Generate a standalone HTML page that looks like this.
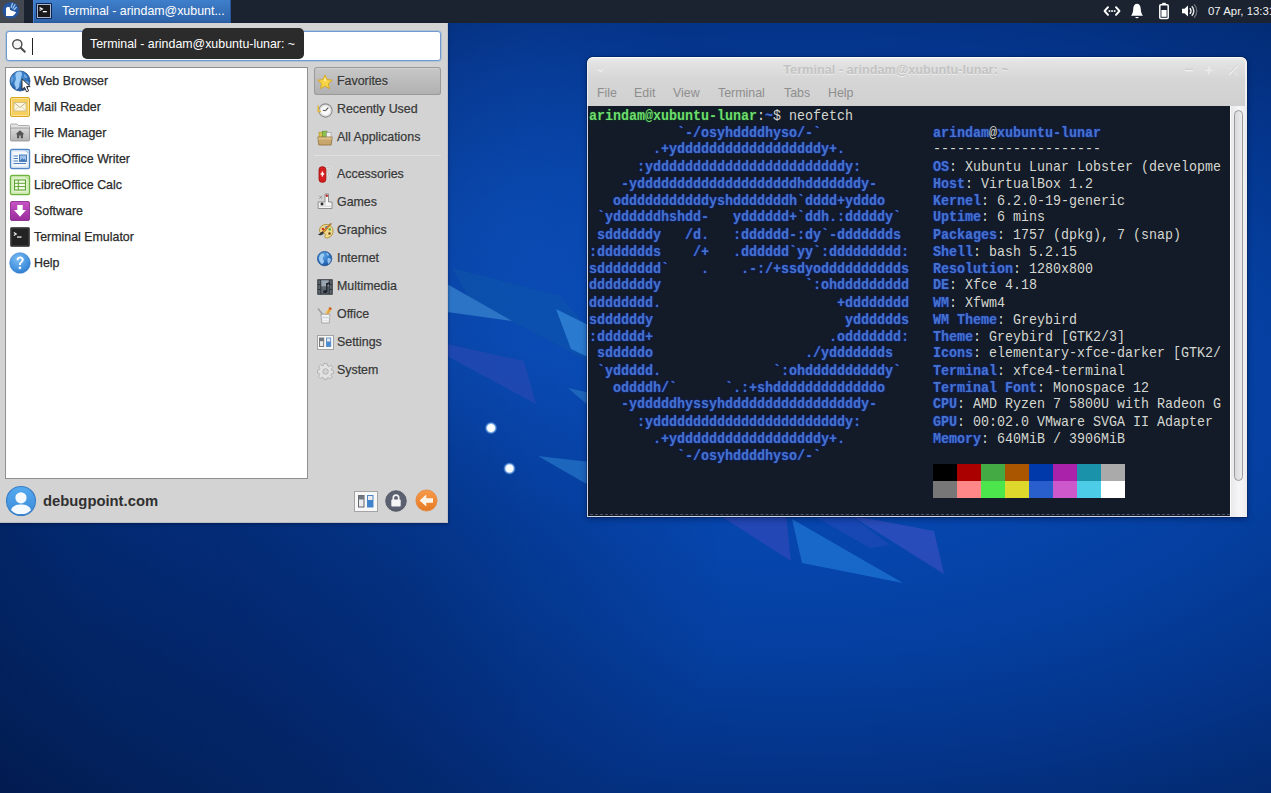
<!DOCTYPE html>
<html>
<head>
<meta charset="utf-8">
<title>Xubuntu Desktop</title>
<style>
*{box-sizing:border-box;margin:0;padding:0}
html,body{width:1271px;height:793px;overflow:hidden}
body{position:relative;font-family:"Liberation Sans",sans-serif;background:#053a96;color:#3c3c3c}
#wall{position:absolute;left:0;top:0;width:1271px;height:793px;
background:
radial-gradient(ellipse 330px 260px at 400px 590px,rgba(0,8,44,.2) 0,rgba(0,8,44,.13) 50%,rgba(0,8,44,0) 100%),
radial-gradient(ellipse 230px 300px at 500px 230px,rgba(22,92,206,.3) 0,rgba(22,92,206,.18) 50%,rgba(22,92,206,0) 100%),
linear-gradient(90deg,rgba(0,8,40,.22) 0,rgba(0,8,40,.16) 18%,rgba(0,8,40,0) 42%),
radial-gradient(ellipse 1100px 570px at 800px 395px,#0749b2 0%,#0645ac 28%,#0540a1 44%,#043a95 54%,#04348a 64%,#032d78 76%,#032768 90%,#02215c 100%);
}
#wallsvg{position:absolute;left:0;top:0}
/* panel */
#panel{position:absolute;left:0;top:0;width:1271px;height:23px;background:#1b2230;color:#fff;font-size:12px}
#mbtn{position:absolute;left:0;top:0;width:24px;height:23px;background:#444851}
#task{position:absolute;left:33px;top:0;width:198px;height:23px;background:linear-gradient(#3f7fcb,#2d62a8);border-left:1px solid #4a86cf;border-right:1px solid #28579a}
#task .tx{position:absolute;left:28px;top:3.600px;font-size:12.4px;color:#fff;white-space:nowrap}
#clock{position:absolute;left:1208px;top:5px;font-size:11.4px;color:#f2f2f2;white-space:nowrap}
/* whisker menu */
#menu{position:absolute;left:0;top:23px;width:448px;height:500px;background:#d3d3d3;border-right:1px solid #bfc3c8;border-bottom:1px solid #b9bdc3;box-shadow:0 1px 3px rgba(0,10,40,.45)}
#search{position:absolute;left:6px;top:8px;width:435px;height:30px;background:#fff;border:1px solid #6f9bd0;border-radius:3px;box-shadow:0 0 0 1px rgba(120,165,220,.35)}
#caret{position:absolute;left:25px;top:6px;width:1px;height:17px;background:#222}
#tip{position:absolute;left:82px;top:28px;width:222px;height:31px;background:#2b2b2b;border-radius:5px;color:#fff;font-size:12.4px;line-height:31px;white-space:nowrap;z-index:30}
#tip span{position:absolute;left:8px;top:.5px}
#list{position:absolute;left:5px;top:44px;width:303px;height:412px;background:#fff;border:1px solid #8f8f8f}
.it{position:absolute;left:0;height:26px;width:300px}
.it svg{position:absolute;left:2px;top:2px}
.it span{position:absolute;left:28px;top:5.700px;-webkit-text-stroke:.25px #2a2a2a;font-size:12.4px;color:#2a2a2a;white-space:nowrap}
.cat{position:absolute;left:314px;width:127px;height:28px}
.cat svg{position:absolute;left:3px;top:6.500px}
.cat span{position:absolute;left:23px;top:7px;-webkit-text-stroke:.25px #383838;font-size:12.4px;color:#383838;white-space:nowrap;text-shadow:0 1px 0 rgba(255,255,255,.35)}
#fav{background:linear-gradient(#c8c8c8,#b0b0b0);box-shadow:inset 0 0 0 1px #9a9a9a,inset 0 2px 0 rgba(255,255,255,.18);border-radius:3px}
#sep{position:absolute;left:314px;top:132px;width:127px;height:1px;background:#c2c2c2;border-bottom:1px solid #e0e0e0}
#user{position:absolute;left:43px;top:470px;font-size:14.8px;font-weight:bold;color:#303030;white-space:nowrap}
/* terminal */
#win{position:absolute;left:587px;top:57px;width:660px;height:460px;background:#d6d6d6;border-radius:6px 6px 0 0;box-shadow:0 0 0 1px rgba(2,20,60,.35),0 2px 6px rgba(0,10,40,.4);overflow:hidden}
#tbar{position:absolute;left:0;top:0;width:660px;height:49px;background:linear-gradient(#ececec 0,#e3e3e3 8%,#d6d6d6 45%,#d0d0d0 100%);border-top:1px solid #fafafa;border-left:1px solid #f2f2f2;border-right:2px solid #f1f1f1;border-radius:6px 6px 0 0}
#ttl{position:absolute;left:0;top:5px;width:616px;text-align:center;font-size:12.7px;font-weight:bold;color:#c3c3c3;text-shadow:0 1px 0 #ededed;white-space:nowrap}
#mbar{position:absolute;left:0;top:28px;height:18px;font-size:12.4px;color:#8e8e8e;white-space:nowrap}
#mbar span{position:absolute;top:0}
#term{position:absolute;left:0;top:49px;width:643px;height:411px;background:#131a28;border-left:1px solid #d3d8e6;border-bottom:1px solid #d3d8e6}
#term:after{content:"";position:absolute;left:2px;right:0;bottom:1px;height:0;border-top:1px dashed rgba(150,160,180,.45)}
#sb{position:absolute;left:643px;top:49px;width:17px;height:411px;background:linear-gradient(90deg,#e9e9ec,#f6f6f8 50%,#ececee);border-left:1px solid #fdfdfd}
#thumb{position:absolute;left:3px;top:4px;width:9px;height:371px;border:1px solid #9a9a9a;border-radius:5px;background:linear-gradient(90deg,#d9d9dc,#ececee)}
pre{position:absolute;left:1px;top:2px;font-family:"Liberation Mono",monospace;font-size:13.333px;line-height:15.741px;color:#d3d7cf;white-space:pre;transform:scaleY(1.08);transform-origin:0 0}
.b{color:#4672cc;font-weight:bold;text-shadow:0 0 2px #14309c,0 0 1px #14309c}
.g{color:#6fdc6f;font-weight:bold;text-shadow:0 0 2px #0f5a1c}
.w{color:#d3d7cf}
#cols{position:absolute;left:345px;top:358px;width:192px;height:34px}
#cols i{position:absolute;width:24px;height:17px}
</style>
</head>
<body>
<div id="wall"></div>
<svg id="wallsvg" width="1271" height="793" viewBox="0 0 1271 793">
<defs>
<radialGradient id="dot"><stop offset="0" stop-color="#ffffff"/><stop offset=".55" stop-color="#f4faff"/><stop offset=".7" stop-color="#9cc9f5" stop-opacity=".8"/><stop offset="1" stop-color="#3b86dd" stop-opacity="0"/></radialGradient>
</defs>
<polygon points="452,268 560,296 590,330 590,362 548,340 470,300" fill="#0d55aa" opacity=".55"/>
<polygon points="447,284 447,312 512,321" fill="#2c74c6"/>
<polygon points="556,309 590,326 590,358 571,349" fill="#2a7bd0"/>
<polygon points="447,344 524,361 536,404 447,356" fill="#2848b2" opacity=".7"/>
<polygon points="568,388 590,393 590,407" fill="#1e66bc"/>
<polygon points="538,456 590,462 590,486" fill="#1c66bd"/>
<polygon points="719,515 786,515 791,561" fill="#2a47b6" opacity=".8"/>
<polygon points="812,515 850,515 890,545 870,548" fill="#1f49b6" opacity=".7"/>
<polygon points="792,519 903,583 802,563" fill="#1a6ccc" opacity=".9"/>
<polygon points="850,515 934,531 944,574" fill="#3a50c0" opacity=".65"/>
<circle cx="491" cy="428" r="6.500" fill="url(#dot)"/>
<circle cx="509.500" cy="468.500" r="6.500" fill="url(#dot)"/>
</svg>

<div id="panel">
 <div id="mbtn"><svg width="24" height="23" viewBox="0 0 24 23" style="position:absolute;left:0;top:0">
<circle cx="10.800" cy="10.400" r="8.200" fill="#24569f"/>
<path d="M11 7.800 L12.600 3 M12.600 8.800 L15.200 4.200 M13.800 10 L16.600 7" stroke="#9cc4f0" stroke-width="1.300" fill="none"/>
<path d="M6 15.900 L6 8 L7.800 6.700 L9.700 7.300 L10.100 10.100 L16.200 12.300 L14.800 14.300 L12.800 15.900 Z" fill="#ffffff"/>
</svg></div>
 <div id="task"><svg width="16" height="16" viewBox="0 0 16 16" style="position:absolute;left:2px;top:3px">
<rect x="0" y="0" width="16" height="16" rx="1" fill="#0d2352"/>
<rect x="1.500" y="1.500" width="13" height="13" fill="#19191b" stroke="#aab6cc" stroke-width="1"/>
<path d="M3.600 4.600 L6.200 6 L3.600 7.400" fill="none" stroke="#fff" stroke-width="1.300"/>
<rect x="6.800" y="8" width="4" height="1.300" fill="#fff"/>
</svg><div class="tx">Terminal - arindam@xubunt...</div></div>
 <svg width="100" height="23" viewBox="0 0 100 23" style="position:absolute;left:1100px;top:0">
<!-- network -->
<g fill="none" stroke="#fff" stroke-width="2" stroke-linecap="round" stroke-linejoin="round">
<path d="M8 7.200 L4.600 11 L8 14.800"/><path d="M16 7.200 L19.400 11 L16 14.800"/>
</g>
<g fill="#fff"><rect x="8.600" y="10.200" width="1.700" height="1.700"/><rect x="11.200" y="10.200" width="1.700" height="1.700"/><rect x="13.800" y="10.200" width="1.700" height="1.700"/></g>
<!-- bell -->
<path d="M37 3.800 C34 3.800 33.300 7 33.200 9.500 C33.100 12.500 32 14.400 31 15.800 L43 15.800 C42 14.400 40.900 12.500 40.800 9.500 C40.700 7 40 3.800 37 3.800 Z" fill="#fff"/>
<path d="M35.200 16.900 A1.900 1.900 0 0 0 38.800 16.900 Z" fill="#fff"/>
<!-- battery -->
<rect x="62.200" y="2.800" width="3.600" height="1.800" fill="#fff"/>
<rect x="59.800" y="4.800" width="8.400" height="13.600" rx="1" fill="none" stroke="#fff" stroke-width="1.500"/>
<rect x="61.400" y="10" width="5.200" height="6.800" fill="#fff"/>
<!-- volume -->
<path d="M82 8.800 L84.500 8.800 L88 5.400 L88 16.600 L84.500 13.200 L82 13.200 Z" fill="#fff"/>
<path d="M89.800 8.200 A4 4 0 0 1 89.800 13.800" fill="none" stroke="#fff" stroke-width="1.500"/>
<path d="M91.800 6.200 A6.800 6.800 0 0 1 91.800 15.800" fill="none" stroke="#fff" stroke-width="1.500" opacity=".85"/>
<path d="M94 4.200 A9.600 9.600 0 0 1 94 17.800" fill="none" stroke="#fff" stroke-width="1.300" opacity=".35"/>
</svg>
 <div id="clock">07 Apr, 13:31</div>
</div>

<div id="menu">
 <div id="search"><svg width="16" height="16" viewBox="0 0 16 16" style="position:absolute;left:4px;top:6px"><circle cx="6.300" cy="6.300" r="4.600" fill="#f4f4f4" stroke="#4a4a4a" stroke-width="1.400"/><path d="M9.700 9.700 L13.800 13.800" stroke="#4a4a4a" stroke-width="2" stroke-linecap="round"/></svg><div id="caret"></div></div>
 <div id="list">
 <div class="it" style="top:0px"><svg style="left:3px;top:2px" width="22" height="22" viewBox="0 0 22 22"><defs><radialGradient id="gl" cx=".42" cy=".35" r=".75"><stop offset="0" stop-color="#5a9fe0"/><stop offset=".6" stop-color="#2d6fba"/><stop offset="1" stop-color="#1c4a8a"/></radialGradient></defs>
<circle cx="11" cy="11" r="10" fill="url(#gl)" stroke="#24528f" stroke-width=".8"/>
<path d="M8.500 1.800 C10.500 1.200 12.800 1.800 13 3.500 C13.200 5.500 11.500 6.500 11.800 8.500 C12 10 11 11 10.500 12.500 C10 14.500 11 16 9.500 18 C8.500 19.300 7 19.800 6.500 19.500 C7.500 17.500 6 16.500 5.500 14.500 C5 12.500 6.500 11.500 7 9.500 C7.500 7.500 6 6.500 6.500 4.500 C6.800 3.200 7.500 2.200 8.500 1.800 Z" fill="#a6d3fa" opacity=".9"/>
<path d="M15 4 C16.500 4.500 18 6 18.500 7.500 C17.500 8.500 15.500 8 15 6.500 Z M16 11.500 C17.500 11 19.500 11.500 20 12.500 C19.500 15 18 17 16.500 18 C15.500 16.500 15.200 13.500 16 11.500 Z" fill="#8fbfea" opacity=".7"/>
<path d="M2.500 7 C3.500 6 4.500 7 4.200 9 C4 11 3 12.500 2.200 13.500 C1.500 11.500 1.700 9 2.500 7 Z" fill="#8fbfea" opacity=".5"/>
</svg><span>Web Browser</span></div>
<div class="it" style="top:26px"><svg style="left:3px;top:2px" width="22" height="22" viewBox="0 0 22 22"><rect x="1.500" y="1.500" width="19" height="19" rx="1.500" fill="#f6cf5e" stroke="#d9a520"/>
<rect x="2.500" y="2.500" width="17" height="17" rx="1" fill="none" stroke="#fbe49a"/>
<rect x="5" y="6.500" width="12" height="8.500" fill="#fdf6e0" stroke="#cdb879" stroke-width=".8"/>
<path d="M5.300 6.800 L11 11.500 L16.700 6.800" fill="none" stroke="#b7a98a" stroke-width=".9"/><path d="M5.300 14.800 L9.500 10.800 M16.700 14.800 L12.500 10.800" fill="none" stroke="#d3c8a8" stroke-width=".7"/>
</svg><span>Mail Reader</span></div>
<div class="it" style="top:52px"><svg style="left:3px;top:2px" width="22" height="22" viewBox="0 0 22 22"><defs><linearGradient id="fd" x1="0" y1="0" x2="0" y2="1"><stop offset="0" stop-color="#d9d9d9"/><stop offset="1" stop-color="#b3b3b3"/></linearGradient></defs>
<path d="M1.500 4 L1.500 3 Q1.500 2 2.500 2 L8 2 L9.500 3.500 L19.500 3.500 Q20.500 3.500 20.500 4.500 L20.500 7 L1.500 7 Z" fill="#e4e4e4" stroke="#9c9c9c" stroke-width=".8"/>
<rect x="1.500" y="6" width="19" height="13" rx="1" fill="url(#fd)" stroke="#8f8f8f" stroke-width=".8"/>
<path d="M11 8.300 L6.600 12.300 L8 12.300 L8 16.200 L10.200 16.200 L10.200 13.600 L11.800 13.600 L11.800 16.200 L14 16.200 L14 12.300 L15.400 12.300 Z" fill="#555"/>
</svg><span>File Manager</span></div>
<div class="it" style="top:78px"><svg style="left:3px;top:2px" width="22" height="22" viewBox="0 0 22 22"><rect x="1.500" y="1.500" width="19" height="19" rx="1.500" fill="#f4f8fd" stroke="#4f86c6" stroke-width="1.400"/>
<rect x="3" y="3" width="16" height="16" fill="none" stroke="#c7dbf2" stroke-width=".8"/>
<g stroke="#4a80c0" stroke-width="1"><path d="M4.500 8 L9 8 M4.500 10.500 L9 10.500 M4.500 13 L9 13 M4.500 15.500 L17 15.500"/></g>
<rect x="10.500" y="7" width="7" height="6.500" fill="#9cc0ea" stroke="#3f74b6" stroke-width=".9"/><path d="M11 13 L13.200 10.300 L14.600 11.800 L15.600 10.800 L17 13 Z" fill="#3f74b6"/>
<path d="M16.500 2.200 L19.800 5.500" stroke="#8fb4e2" stroke-width="1"/>
</svg><span>LibreOffice Writer</span></div>
<div class="it" style="top:104px"><svg style="left:3px;top:2px" width="22" height="22" viewBox="0 0 22 22"><rect x="1.500" y="1.500" width="19" height="19" rx="1.500" fill="#e3f4d0" stroke="#6fb341" stroke-width="1.400"/>
<rect x="3" y="3" width="16" height="16" fill="none" stroke="#c3e6a3" stroke-width=".8"/>
<rect x="5.500" y="6" width="11" height="10" fill="#f6fcee" stroke="#5ea432" stroke-width="1.100"/>
<path d="M5.500 9.300 L16.500 9.300 M5.500 12.600 L16.500 12.600 M9.300 6 L9.300 16" stroke="#5ea432" stroke-width="1"/>
<path d="M16.500 2.200 L19.800 5.500" stroke="#9ed273" stroke-width="1"/>
</svg><span>LibreOffice Calc</span></div>
<div class="it" style="top:130px"><svg style="left:3px;top:2px" width="22" height="22" viewBox="0 0 22 22"><defs><linearGradient id="sw" x1="0" y1="0" x2="0" y2="1"><stop offset="0" stop-color="#c653c4"/><stop offset="1" stop-color="#9a2b9c"/></linearGradient></defs>
<rect x="1.500" y="1.500" width="19" height="19" rx="1.500" fill="url(#sw)" stroke="#8a2a8c" stroke-width=".9"/>
<path d="M8.300 5 L13.700 5 L13.700 10 L17 10 L11 16.800 L5 10 L8.300 10 Z" fill="#fff"/>
</svg><span>Software</span></div>
<div class="it" style="top:156px"><svg style="left:3px;top:2px" width="22" height="22" viewBox="0 0 22 22"><rect x="1.500" y="1.500" width="19" height="19" rx="1" fill="#232323" stroke="#555" stroke-width="1"/>
<rect x="2.600" y="2.600" width="16.800" height="16.800" fill="none" stroke="#3b3b3b" stroke-width=".8"/>
<path d="M4.800 6.500 L7.200 8 L4.800 9.500" fill="none" stroke="#eee" stroke-width="1.200"/><rect x="8" y="10.400" width="4.500" height="1.300" fill="#eee"/>
</svg><span>Terminal Emulator</span></div>
<div class="it" style="top:182px"><svg style="left:3px;top:2px" width="22" height="22" viewBox="0 0 22 22"><defs><radialGradient id="hp" cx=".4" cy=".3" r=".8"><stop offset="0" stop-color="#7cbcf3"/><stop offset=".7" stop-color="#3f8fdd"/><stop offset="1" stop-color="#2b6fbe"/></radialGradient></defs>
<circle cx="11" cy="11" r="10.300" fill="url(#hp)" stroke="#3a7fd0" stroke-width=".6"/>
<path d="M7.600 8.200 C7.600 5.800 9.200 4.600 11.200 4.600 C13.300 4.600 14.700 5.900 14.700 7.700 C14.700 9.300 13.700 10 12.800 10.800 C12.100 11.400 11.900 12 11.900 13 L9.900 13 C9.900 11.500 10.300 10.700 11.300 9.900 C12.100 9.200 12.600 8.700 12.600 7.900 C12.600 7 12 6.500 11.100 6.500 C10.100 6.500 9.600 7.200 9.600 8.200 Z" fill="#fff"/><circle cx="10.900" cy="15.800" r="1.350" fill="#fff"/>
</svg><span>Help</span></div>
 </div>
 <div class="cat" id="fav" style="top:44px"><svg width="16" height="16" viewBox="0 0 16 16"><path d="M8 1 L10.100 5.600 L15.200 6.200 L11.400 9.600 L12.500 14.600 L8 12 L3.500 14.600 L4.600 9.600 L.8 6.200 L5.900 5.600 Z" fill="#f7d447" stroke="#d6a51c" stroke-width=".9" stroke-linejoin="round"/><path d="M8 3 L9.400 6.400 L8 7.500 L6.600 6.400 Z" fill="#fcec96"/></svg><span>Favorites</span></div>
<div class="cat" style="top:72px"><svg width="16" height="16" viewBox="0 0 16 16"><circle cx="8.500" cy="8.500" r="6.600" fill="#ededed" stroke="#8d8d8d" stroke-width="1.100"/><circle cx="8.500" cy="8.500" r="5" fill="#fafafa" stroke="#d0d0d0" stroke-width=".6"/><path d="M8.500 8.700 L11.300 5.600 M8.500 8.700 L5.800 8.200" stroke="#555" stroke-width="1.100" fill="none"/><path d="M1.200 3.500 L1.200 9.500 L4 9.500" stroke="#e2b93a" stroke-width="1.500" fill="none"/></svg><span>Recently Used</span></div>
<div class="cat" style="top:100px"><svg width="16" height="16" viewBox="0 0 16 16"><rect x="2" y="2.200" width="4.500" height="5" fill="#d9c24a" stroke="#a8922a" stroke-width=".6"/><rect x="5.500" y="1.200" width="4.500" height="6" fill="#8cc152" stroke="#5a8f2a" stroke-width=".6"/><rect x="9.500" y="2.500" width="4.500" height="5" fill="#f2f2f2" stroke="#9a9a9a" stroke-width=".6"/>
<path d="M.8 7 L15.200 7 L14.200 15 L1.800 15 Z" fill="#c9a66b" stroke="#8f7240" stroke-width=".8"/><path d="M1.200 7.500 L14.800 7.500 L14.600 9.500 L1.400 9.500 Z" fill="#dcbf8a"/></svg><span>All Applications</span></div>
<div class="cat" style="top:137px"><svg width="16" height="17" viewBox="0 0 16 17" style="left:3.700px;top:5.500px"><path d="M8 2 C11 0 14.500 1.500 13 4.500 C12 6 10 6.500 10.500 8.500 C11 10.500 13 12 11.500 14.500" fill="none" stroke="#e8e8e8" stroke-width="2.200"/><path d="M8 2 C11 0 14.500 1.500 13 4.500 C12 6 10 6.500 10.500 8.500 C11 10.500 13 12 11.500 14.500" fill="none" stroke="#a9a9a9" stroke-width=".7"/>
<rect x="1" y=".8" width="6.800" height="15.400" rx="2.800" fill="#d81e1e" stroke="#9c0f0f" stroke-width=".8"/><path d="M4.400 5.500 L4.400 10.500 M2.600 8 L6.200 8" stroke="#fff" stroke-width="1.400"/></svg><span>Accessories</span></div>
<div class="cat" style="top:165px"><svg width="16" height="17" viewBox="0 0 16 17" style="top:4.500px"><path d="M1.200 9 L1.200 15.500 L15 15.500 L15 9 L11.500 9 L11.500 1 L8 1 L8 9 Z" fill="#f7f7f7" stroke="#858585" stroke-width=".9"/><path d="M8 12.500 L8 9" stroke="#bdbdbd" stroke-width=".8"/>
<circle cx="9.800" cy="2.800" r="1.200" fill="#b22"/><circle cx="5" cy="11" r="1.500" fill="#2a2a2a"/><path d="M2.300 2.800 L5.300 5.800 M5.300 2.800 L2.300 5.800" stroke="#8f8f8f" stroke-width=".9"/><path d="M1.200 13.200 L15 13.200" stroke="#c9c9c9" stroke-width=".8"/></svg><span>Games</span></div>
<div class="cat" style="top:193px"><svg width="17" height="16" viewBox="0 0 17 16"><path d="M9 1.500 C13.500 1.500 16 4.500 16 8 C16 12 13 15 9.500 15 C7.500 15 7.500 13.500 8.200 12.500 C9 11.300 8 10.300 6.600 10.600 C4 11.200 2.200 9.500 2.500 7 C2.900 3.800 5.500 1.500 9 1.500 Z" fill="#f0d98a" stroke="#a98d33" stroke-width=".9"/>
<circle cx="6" cy="6" r="1.300" fill="#c33"/><circle cx="9.500" cy="4.200" r="1.200" fill="#3b7dd8"/><circle cx="12.800" cy="6.400" r="1.200" fill="#4a4"/><circle cx="12.500" cy="10.500" r="1.300" fill="#7a4a20"/>
<path d="M14.500 .8 L7 9.500 L5 10.200 L5.800 8.300 L13.600 .2 Z" fill="#d8892b" stroke="#8b5513" stroke-width=".5"/><path d="M5.700 8.500 C3.500 9 2.800 11 .8 11.500 C2.500 13 6 12.500 6.800 9.800 Z" fill="#3a3a3a"/></svg><span>Graphics</span></div>
<div class="cat" style="top:221px"><svg width="17" height="17" viewBox="0 0 17 17"><defs><radialGradient id="gl2" cx=".4" cy=".3" r=".8"><stop offset="0" stop-color="#5fa6e6"/><stop offset=".6" stop-color="#2c70c0"/><stop offset="1" stop-color="#1b4a8e"/></radialGradient></defs><circle cx="7.600" cy="7.600" r="7.200" fill="url(#gl2)" stroke="#1f4f8f" stroke-width=".7"/>
<path d="M3.500 3.500 C5 2 6.800 2.500 7.300 3.500 C7.300 5 6 5.500 5.800 7 C5.500 8.300 7 9 7 10.300 C7 11.700 5.800 12.600 5 13.300 C2.800 11.700 1.800 9.300 2 7 C2.200 5.600 2.800 4.400 3.500 3.500 Z" fill="#a9d2f4" opacity=".9"/><path d="M9.500 1.800 C11 2.200 12 3.200 12 4.300 C10.900 4.900 9.900 4.200 9.500 3.200 Z M10.800 7.200 C12.200 6.800 13.600 7.600 14 8.600 C13.600 10.700 12.600 12.200 11.200 13 C10.500 11.500 10.100 9.200 10.800 7.200 Z" fill="#a9d2f4" opacity=".85"/></svg><span>Internet</span></div>
<div class="cat" style="top:249px"><svg width="16" height="16" viewBox="0 0 16 16"><rect x=".8" y=".8" width="14.400" height="14.400" fill="#5d6670" stroke="#2d3238" stroke-width="1"/><path d="M3.800 .8 L3.800 15.200 M12.200 .8 L12.200 15.200" stroke="#2d3238" stroke-width="1"/><path d="M.8 5.500 L3.800 5.500 M.8 10.500 L3.800 10.500 M12.200 5.500 L15.200 5.500 M12.200 10.500 L15.200 10.500" stroke="#2d3238" stroke-width="1"/>
<rect x="4.300" y="1.300" width="7.400" height="6" fill="#9aa5b2"/><path d="M9.800 4 L9.800 12.200" stroke="#20242a" stroke-width="1.400"/><path d="M9.800 4 L13 3 L13 5 L9.800 6 Z" fill="#20242a"/><ellipse cx="8.200" cy="12.600" rx="2.200" ry="1.700" fill="#20242a"/></svg><span>Multimedia</span></div>
<div class="cat" style="top:277px"><svg width="16" height="17" viewBox="0 0 16 17"><path d="M1 1.500 L6.500 8.500" stroke="#9a9a9a" stroke-width="1.300"/><path d="M13.800 .8 L9 8.500" stroke="#e8a23a" stroke-width="2.600"/><path d="M13.800 .8 L12.800 2.400" stroke="#c85a2a" stroke-width="2.600"/><path d="M10.500 3 L8.500 8.500" stroke="#f0c860" stroke-width="1.200"/>
<path d="M4 7.200 L13 7.200 L12.300 16 L4.700 16 Z" fill="#f3f3f3" stroke="#9f9f9f" stroke-width=".9"/><path d="M4.300 10.500 L12.700 10.500" stroke="#cfd6de" stroke-width="1.500"/><path d="M4.600 13.500 L12.400 13.500" stroke="#e3e3e3" stroke-width="1"/></svg><span>Office</span></div>
<div class="cat" style="top:305px"><svg width="17" height="15" viewBox="0 0 17 15"><rect x=".5" y=".5" width="16" height="14" fill="#f7f7f7" stroke="#a4a4a4"/><rect x="2.500" y="3" width="4.200" height="8.500" fill="#e9e9e9" stroke="#6f6f6f" stroke-width=".9"/><rect x="2.500" y="3" width="4.200" height="3.200" fill="#6f7780"/><rect x="9.500" y="3" width="4.200" height="8.500" fill="#e9e9e9" stroke="#5a8dc6" stroke-width=".9"/><rect x="9.500" y="6.500" width="4.200" height="5" fill="#4a8bd0"/></svg><span>Settings</span></div>
<div class="cat" style="top:333px"><svg width="17" height="17" viewBox="0 0 17 17"><g transform="translate(8.500 8.500)"><path d="M-1.600 -8 L1.600 -8 L2 -5.600 L3.600 -4.900 L5.600 -6.300 L7.300 -4.200 L5.700 -2.500 L6.200 -1 L8 -.6 L8 2 L5.900 2.300 L5.300 3.800 L6.600 5.700 L4.600 7.400 L2.800 6 L1.400 6.500 L1.100 8 L-1.500 8 L-1.800 6.300 L-3.300 5.700 L-5.200 7 L-7.100 5.100 L-5.800 3.200 L-6.400 1.800 L-8 1.500 L-8 -1.300 L-6.200 -1.700 L-5.600 -3.200 L-6.900 -5 L-5 -6.900 L-3.300 -5.600 L-2 -6.100 Z" fill="#e2e2e2" stroke="#a9a9a9" stroke-width=".8" stroke-linejoin="round"/><circle r="2.800" fill="#d3d3d3" stroke="#a9a9a9" stroke-width=".8"/></g></svg><span>System</span></div>
 <div id="sep"></div>
 <svg width="32" height="32" viewBox="0 0 32 32" style="position:absolute;left:5px;top:462px"><defs><linearGradient id="av" x1="0" y1="0" x2="0" y2="1"><stop offset="0" stop-color="#55aaf0"/><stop offset="1" stop-color="#3b8ad8"/></linearGradient><clipPath id="avc"><circle cx="16" cy="16" r="13.500"/></clipPath></defs>
<circle cx="16" cy="16" r="14.500" fill="url(#av)" stroke="#3a7fc6" stroke-width="1.200"/>
<g clip-path="url(#avc)"><circle cx="16" cy="12.800" r="5.600" fill="#f4faff"/><path d="M5.500 29 C5.500 21.500 10 19.500 16 19.500 C22 19.500 26.500 21.500 26.500 29 Z" fill="#f4faff"/></g></svg>
<svg width="24" height="21" viewBox="0 0 24 21" style="position:absolute;left:354px;top:468px"><rect x=".5" y=".5" width="23" height="20" fill="#f7f7f7" stroke="#a4a4a4"/><rect x="4.500" y="4.500" width="5.500" height="11.500" fill="#ececec" stroke="#5f676f"/><rect x="4.500" y="4.500" width="5.500" height="4" fill="#6f7780"/><rect x="13.500" y="4.500" width="5.500" height="11.500" fill="#ececec" stroke="#4f86c6"/><rect x="13.500" y="9" width="5.500" height="7" fill="#3f83cc"/></svg>
<svg width="22" height="22" viewBox="0 0 22 22" style="position:absolute;left:385px;top:467px"><circle cx="11" cy="11" r="10.300" fill="#5b6170" stroke="#4a4f5c" stroke-width=".8"/><path d="M8.300 10 L8.300 7.800 A2.700 2.700 0 0 1 13.700 7.800 L13.700 10" fill="none" stroke="#f3f3f3" stroke-width="1.700"/><rect x="6.300" y="9.600" width="9.400" height="6.800" rx="1" fill="#f6f6f6"/></svg>
<svg width="23" height="23" viewBox="0 0 23 23" style="position:absolute;left:415px;top:466px"><defs><linearGradient id="og" x1="0" y1="0" x2="0" y2="1"><stop offset="0" stop-color="#f79a4a"/><stop offset="1" stop-color="#e67a22"/></linearGradient></defs><circle cx="11.500" cy="11.500" r="10.600" fill="url(#og)" stroke="#e08a45" stroke-width=".8"/><path d="M4.600 11.500 L11.300 5.600 L11.300 9.200 L18 9.200 L18 13.800 L11.300 13.800 L11.300 17.400 Z" fill="#fdf4ea"/></svg>
 <div id="user">debugpoint.com</div>
</div>
<svg width="12" height="16" viewBox="0 0 12 16" style="position:absolute;left:21px;top:78px;z-index:40"><path d="M1 .8 L1 11.600 L3.500 9.300 L5.600 13.800 L7.600 12.900 L5.600 8.600 L9.200 8.600 Z" fill="#fff" stroke="#1c1c1c" stroke-width=".9" stroke-linejoin="round"/></svg>
<div id="tip"><span>Terminal - arindam@xubuntu-lunar: ~</span></div>

<div id="win">
 <div id="tbar">
  <div id="ttl">Terminal - arindam@xubuntu-lunar: ~</div>
  <svg width="70" height="24" viewBox="0 0 70 24" style="position:absolute;left:586px;top:1px"><g stroke="#f1f1f1" stroke-width="1.600" fill="none"><path d="M11 11.500 L19 11.500"/><path d="M31 11.500 L39 11.500 M35 7.500 L35 15.500" opacity=".7"/><path d="M55 7.500 L63 15.500 M63 7.500 L55 15.500"/></g>
<g stroke="#bdbdbd" stroke-width="1" fill="none" opacity=".6"><path d="M11 10.300 L19 10.300"/><path d="M54.500 6.800 L62.500 14.800 M62.500 6.800 L54.500 14.800"/></g></svg>
<svg width="12" height="10" viewBox="0 0 12 10" style="position:absolute;left:7px;top:8px"><path d="M3 2.800 L5.500 5.300 L8 2.800" fill="none" stroke="#f2f2f2" stroke-width="1.500"/><path d="M3 2 L5.500 4.400 L8 2" fill="none" stroke="#c6c6c6" stroke-width=".7" opacity=".7"/></svg>
  <div id="mbar"><span style="left:9px">File</span><span style="left:46px">Edit</span><span style="left:85px">View</span><span style="left:130px">Terminal</span><span style="left:196px">Tabs</span><span style="left:240px">Help</span></div>
 </div>
 <div id="term">
<pre><span class="g">arindam@xubuntu-lunar</span>:<span class="b">~</span>$ neofetch
<span class="b">           `-/osyhddddhyso/-`              </span><span class="b">arindam</span>@<span class="b">xubuntu-lunar</span>
<span class="b">        .+yddddddddddddddddddy+.           </span>---------------------
<span class="b">      :yddddddddddddddddddddddddy:         </span><span class="b">OS</span>: Xubuntu Lunar Lobster (developme
<span class="b">    -yddddddddddddddddddddhdddddddy-       </span><span class="b">Host</span>: VirtualBox 1.2
<span class="b">   odddddddddddyshdddddddh`dddd+ydddo      </span><span class="b">Kernel</span>: 6.2.0-19-generic
<span class="b"> `yddddddhshdd-   ydddddd+`ddh.:dddddy`    </span><span class="b">Uptime</span>: 6 mins
<span class="b"> sddddddy   /d.   :dddddd-:dy`-ddddddds    </span><span class="b">Packages</span>: 1757 (dpkg), 7 (snap)
<span class="b">:ddddddds    /+   .dddddd`yy`:ddddddddd:   </span><span class="b">Shell</span>: bash 5.2.15
<span class="b">sdddddddd`    .    .-:/+ssdyodddddddddds   </span><span class="b">Resolution</span>: 1280x800
<span class="b">ddddddddy                  `:ohddddddddd   </span><span class="b">DE</span>: Xfce 4.18
<span class="b">dddddddd.                      +dddddddd   </span><span class="b">WM</span>: Xfwm4
<span class="b">sddddddy                        ydddddds   </span><span class="b">WM Theme</span>: Greybird
<span class="b">:dddddd+                      .oddddddd:   </span><span class="b">Theme</span>: Greybird [GTK2/3]
<span class="b"> sdddddo                   ./yddddddds     </span><span class="b">Icons</span>: elementary-xfce-darker [GTK2/
<span class="b"> `yddddd.              `:ohddddddddddy`    </span><span class="b">Terminal</span>: xfce4-terminal
<span class="b">   oddddh/`      `.:+shdddddddddddddo      </span><span class="b">Terminal Font</span>: Monospace 12
<span class="b">    -ydddddhyssyhdddddddddddddddddy-       </span><span class="b">CPU</span>: AMD Ryzen 7 5800U with Radeon G
<span class="b">      :yddddddddddddddddddddddddy:         </span><span class="b">GPU</span>: 00:02.0 VMware SVGA II Adapter
<span class="b">        .+yddddddddddddddddddy+.           </span><span class="b">Memory</span>: 640MiB / 3906MiB
<span class="b">           `-/osyhddddhyso/-`              </span></pre>
  <div id="cols"><i style="left:0px;top:0;background:#000000"></i><i style="left:0px;top:17px;background:#777777"></i><i style="left:24px;top:0;background:#aa0000"></i><i style="left:24px;top:17px;background:#ff8787"></i><i style="left:48px;top:0;background:#44aa44"></i><i style="left:48px;top:17px;background:#4ce64c"></i><i style="left:72px;top:0;background:#aa5500"></i><i style="left:72px;top:17px;background:#ded82c"></i><i style="left:96px;top:0;background:#0039aa"></i><i style="left:96px;top:17px;background:#295fcc"></i><i style="left:120px;top:0;background:#aa22aa"></i><i style="left:120px;top:17px;background:#cc58cc"></i><i style="left:144px;top:0;background:#1a92aa"></i><i style="left:144px;top:17px;background:#4ccce6"></i><i style="left:168px;top:0;background:#aaaaaa"></i><i style="left:168px;top:17px;background:#ffffff"></i></div>
 </div>
 <div id="sb"><div id="thumb"></div></div>
</div>
</body>
</html>
